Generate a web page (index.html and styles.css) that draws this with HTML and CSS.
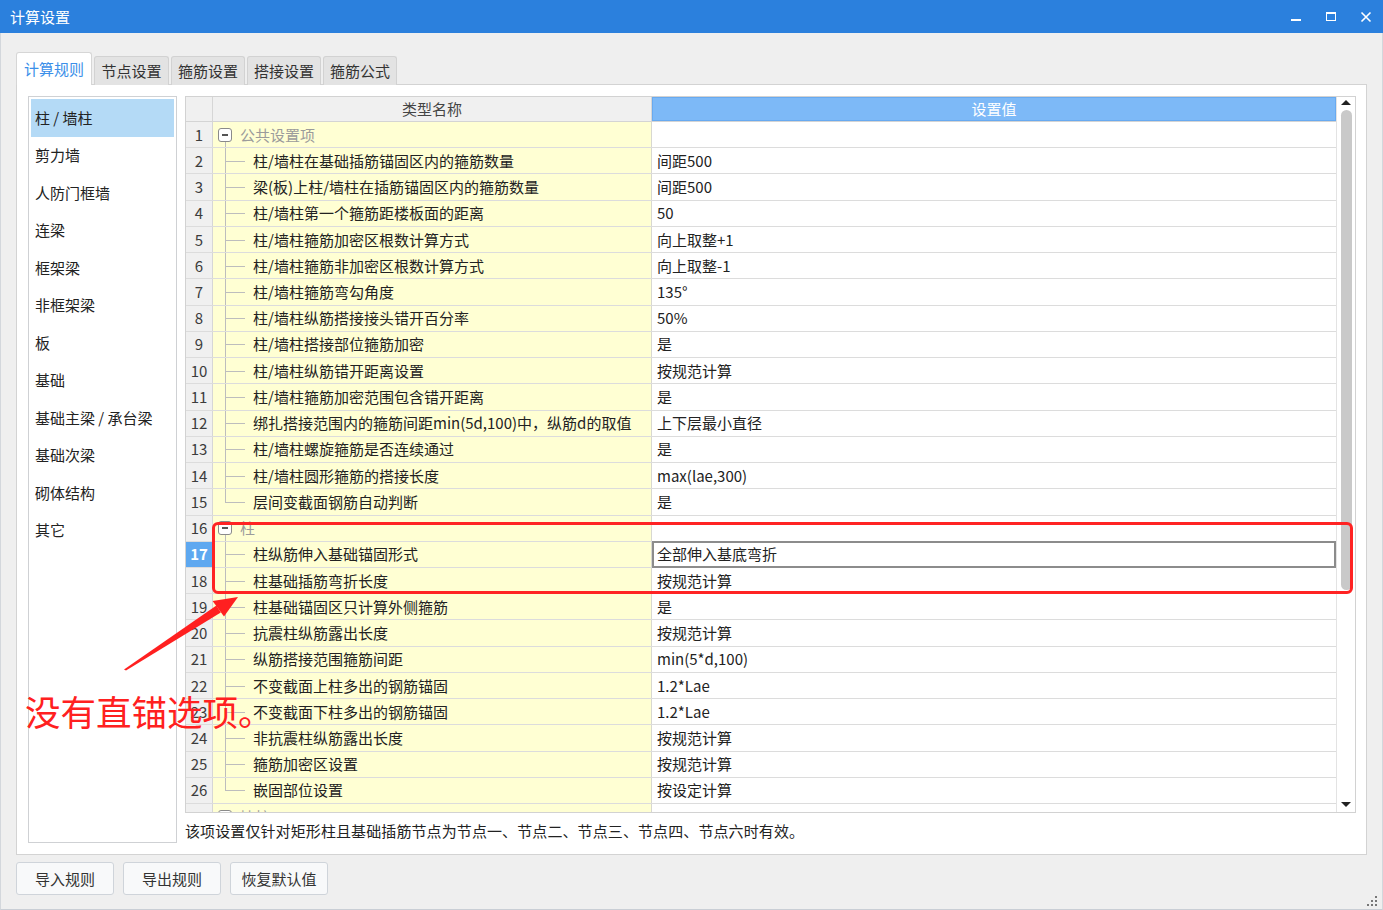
FILE: index.html
```html
<!DOCTYPE html>
<html lang="zh-CN">
<head>
<meta charset="utf-8">
<title>计算设置</title>
<link rel="stylesheet" href="styles.css">
</head>
<body>
<div class="window">
  <div class="titlebar">
    <span class="title">计算设置</span>
    <div class="winctl">
      <span class="wbtn"><svg width="12" height="12" viewBox="0 0 12 12"><rect x="1" y="8" width="10" height="2" fill="#fff"/></svg></span>
      <span class="wbtn"><svg width="12" height="12" viewBox="0 0 12 12"><rect x="1.5" y="1.5" width="9" height="8" fill="none" stroke="#fff" stroke-width="1"/><rect x="1" y="1" width="10" height="2" fill="#fff"/></svg></span>
      <span class="wbtn"><svg width="12" height="12" viewBox="0 0 12 12"><path d="M1.5 1.5 L10.5 10.5 M10.5 1.5 L1.5 10.5" stroke="#fff" stroke-width="1.6"/></svg></span>
    </div>
  </div>

  <div class="tabs">
    <div class="tab active">计算规则</div>
    <div class="tab w75">节点设置</div>
    <div class="tab">箍筋设置</div>
    <div class="tab">搭接设置</div>
    <div class="tab">箍筋公式</div>
  </div>

  <div class="panel">
    <ul class="sidebar">
      <li class="selected">柱 / 墙柱</li>
      <li>剪力墙</li>
      <li>人防门框墙</li>
      <li>连梁</li>
      <li>框架梁</li>
      <li>非框架梁</li>
      <li>板</li>
      <li>基础</li>
      <li>基础主梁 / 承台梁</li>
      <li>基础次梁</li>
      <li>砌体结构</li>
      <li>其它</li>
    </ul>

    <div class="right">
      <div class="grid">
        <div class="gridbody">
          <div class="row hdr">
            <div class="num"></div>
            <div class="hname">类型名称</div>
            <div class="hval">设置值</div>
          </div>

          <div class="row"><div class="num">1</div><div class="name grp first"><span class="box"></span>公共设置项</div><div class="val"></div></div>
          <div class="row"><div class="num">2</div><div class="name c">柱/墙柱在基础插筋锚固区内的箍筋数量</div><div class="val">间距500</div></div>
          <div class="row"><div class="num">3</div><div class="name c">梁(板)上柱/墙柱在插筋锚固区内的箍筋数量</div><div class="val">间距500</div></div>
          <div class="row"><div class="num">4</div><div class="name c">柱/墙柱第一个箍筋距楼板面的距离</div><div class="val">50</div></div>
          <div class="row"><div class="num">5</div><div class="name c">柱/墙柱箍筋加密区根数计算方式</div><div class="val">向上取整+1</div></div>
          <div class="row"><div class="num">6</div><div class="name c">柱/墙柱箍筋非加密区根数计算方式</div><div class="val">向上取整-1</div></div>
          <div class="row"><div class="num">7</div><div class="name c">柱/墙柱箍筋弯勾角度</div><div class="val">135°</div></div>
          <div class="row"><div class="num">8</div><div class="name c">柱/墙柱纵筋搭接接头错开百分率</div><div class="val">50%</div></div>
          <div class="row"><div class="num">9</div><div class="name c">柱/墙柱搭接部位箍筋加密</div><div class="val">是</div></div>
          <div class="row"><div class="num">10</div><div class="name c">柱/墙柱纵筋错开距离设置</div><div class="val">按规范计算</div></div>
          <div class="row"><div class="num">11</div><div class="name c">柱/墙柱箍筋加密范围包含错开距离</div><div class="val">是</div></div>
          <div class="row"><div class="num">12</div><div class="name c">绑扎搭接范围内的箍筋间距min(5d,100)中，纵筋d的取值</div><div class="val">上下层最小直径</div></div>
          <div class="row"><div class="num">13</div><div class="name c">柱/墙柱螺旋箍筋是否连续通过</div><div class="val">是</div></div>
          <div class="row"><div class="num">14</div><div class="name c">柱/墙柱圆形箍筋的搭接长度</div><div class="val">max(lae,300)</div></div>
          <div class="row"><div class="num">15</div><div class="name c last">层间变截面钢筋自动判断</div><div class="val">是</div></div>
          <div class="row"><div class="num">16</div><div class="name grp first"><span class="box"></span>柱</div><div class="val"></div></div>
          <div class="row"><div class="num cur">17</div><div class="name c">柱纵筋伸入基础锚固形式</div><div class="val edit">全部伸入基底弯折</div></div>
          <div class="row"><div class="num">18</div><div class="name c">柱基础插筋弯折长度</div><div class="val">按规范计算</div></div>
          <div class="row"><div class="num">19</div><div class="name c">柱基础锚固区只计算外侧箍筋</div><div class="val">是</div></div>
          <div class="row"><div class="num">20</div><div class="name c">抗震柱纵筋露出长度</div><div class="val">按规范计算</div></div>
          <div class="row"><div class="num">21</div><div class="name c">纵筋搭接范围箍筋间距</div><div class="val">min(5*d,100)</div></div>
          <div class="row"><div class="num">22</div><div class="name c">不变截面上柱多出的钢筋锚固</div><div class="val">1.2*Lae</div></div>
          <div class="row"><div class="num">23</div><div class="name c">不变截面下柱多出的钢筋锚固</div><div class="val">1.2*Lae</div></div>
          <div class="row"><div class="num">24</div><div class="name c">非抗震柱纵筋露出长度</div><div class="val">按规范计算</div></div>
          <div class="row"><div class="num">25</div><div class="name c">箍筋加密区设置</div><div class="val">按规范计算</div></div>
          <div class="row"><div class="num">26</div><div class="name c last">嵌固部位设置</div><div class="val">按设定计算</div></div>
          <div class="row"><div class="num">27</div><div class="name grp"><span class="box"></span>墙柱</div><div class="val"></div></div>
        </div>
        <div class="scrollbar">
          <span class="arrow up"></span>
          <span class="thumb"></span>
          <span class="spacer"></span>
          <span class="arrow down"></span>
        </div>
      </div>
      <div class="desc">该项设置仅针对矩形柱且基础插筋节点为节点一、节点二、节点三、节点四、节点六时有效。</div>
    </div>
  </div>

  <div class="btns">
    <button class="btn">导入规则</button>
    <button class="btn">导出规则</button>
    <button class="btn">恢复默认值</button>
  </div>

  <svg class="grip" width="12" height="12" viewBox="0 0 12 12">
    <rect x="9" y="1" width="2" height="2" fill="#777"/>
    <rect x="5" y="5" width="2" height="2" fill="#777"/>
    <rect x="9" y="5" width="2" height="2" fill="#777"/>
    <rect x="1" y="9" width="2" height="2" fill="#777"/>
    <rect x="5" y="9" width="2" height="2" fill="#777"/>
    <rect x="9" y="9" width="2" height="2" fill="#777"/>
  </svg>

  <div class="redbox"></div>
  <svg class="arrowsvg" width="1383" height="910" viewBox="0 0 1383 910">
    <polygon points="124,669.5 126,670.5 220.8,612.4 216.4,605.6" fill="#ff2020"/>
    <polygon points="238,597 224,616.5 212.6,601" fill="#ff2020"/>
  </svg>
  <div class="note">没有直锚选项。</div>
</div>
</body>
</html>
```

FILE: styles.css
```css
* { box-sizing: border-box; }

html, body {
  margin: 0;
  padding: 0;
}

body {
  width: 1383px;
  height: 910px;
  overflow: hidden;
  background: #efefef;
  font-family: "Noto Sans CJK SC", "Noto Sans", sans-serif;
  font-size: 15px;
  color: #222;
}

.window {
  position: relative;
  width: 1383px;
  height: 910px;
  border-left: 1px solid #d3d7dc;
  border-right: 1px solid #d3d7dc;
  border-bottom: 1px solid #c9ced5;
}

.titlebar {
  height: 33px;
  margin: 0 -1px;
  background: #2b80dd;
  color: #fff;
  display: flex;
  align-items: center;
  padding-left: 10px;
}

.title {
  font-size: 15px;
  line-height: 20px;
}

.winctl {
  margin-left: auto;
  display: flex;
}

.wbtn {
  width: 35px;
  height: 33px;
  display: flex;
  align-items: center;
  justify-content: center;
}

.tabs {
  display: flex;
  align-items: flex-end;
  gap: 2px;
  margin: 19px 0 -1px 15px;
  position: relative;
  z-index: 1;
}

.tab {
  width: 74px;
  height: 29px;
  display: flex;
  align-items: center;
  justify-content: center;
  background: #e3e3e3;
  border: 1px solid #d2d2d2;
  border-bottom: none;
  border-radius: 3px 3px 0 0;
  color: #333;
  line-height: 20px;
}

.tab.w75 { width: 75px; }

.tab.active {
  width: 76px;
  height: 33px;
  background: #fff;
  color: #3b8fe9;
  border-color: #d6d6d6;
}

.panel {
  margin-left: 15px;
  width: 1351px;
  height: 771px;
  background: #fff;
  border: 1px solid #d3d3d3;
  display: flex;
  padding: 11px 10px 12px 11px;
}

.sidebar {
  list-style: none;
  margin: 0;
  width: 149px;
  height: 747px;
  border: 1px solid #cfd1d4;
  padding: 2px;
}

.sidebar li {
  height: 37.5px;
  display: flex;
  align-items: center;
  padding-left: 4px;
  line-height: 20px;
  color: #222;
}

.sidebar li.selected {
  background: #b4daf6;
}

.right {
  flex: 1;
  margin-left: 8px;
  display: flex;
  flex-direction: column;
}

.grid {
  height: 717px;
  border: 1px solid #d2d2d2;
  display: flex;
}

.gridbody {
  flex: 1;
  overflow: hidden;
}

.row {
  display: grid;
  grid-template-columns: 27px 439px 1fr;
  height: 26.24px;
  border-bottom: 1px solid #dcdcdc;
  line-height: 20px;
}

.row.hdr {
  height: 25px;
  border-bottom: 1px solid #d4d4d4;
}

.num {
  background: #f0f0f0;
  border-right: 1px solid #d6d6d6;
  display: flex;
  align-items: center;
  justify-content: center;
  color: #3c3c3c;
  font-size: 15px;
}

.num.cur {
  background: #5ea8f0;
  color: #fff;
  font-weight: bold;
}

.hname {
  background: #f0f0f0;
  border-right: 1px solid #d6d6d6;
  display: flex;
  align-items: center;
  justify-content: center;
  color: #444;
}

.hval {
  background: #7db9f7;
  border: 1px solid #68aaf0;
  display: flex;
  align-items: center;
  justify-content: center;
  color: #fff;
}

.name {
  position: relative;
  background: #ffffd3;
  border-right: 1px solid #d8d8d0;
  padding-left: 40px;
  display: flex;
  align-items: center;
  white-space: nowrap;
  overflow: hidden;
  color: #222;
}

.name.c::before {
  content: "";
  position: absolute;
  left: 12px;
  top: -1px;
  bottom: -1px;
  width: 1px;
  background: #bdbdbd;
}

.name.c.last::before {
  bottom: 50%;
}

.name.c::after {
  content: "";
  position: absolute;
  left: 12px;
  width: 20px;
  top: 50%;
  height: 1px;
  background: #bdbdbd;
}

.name.grp {
  padding-left: 27px;
  color: #9b9b9b;
}

.name.grp.first::after {
  content: "";
  position: absolute;
  left: 12px;
  top: calc(50% + 7px);
  bottom: -1px;
  width: 1px;
  background: #bdbdbd;
}

.box {
  position: absolute;
  left: 5px;
  top: 50%;
  margin-top: -7px;
  width: 14px;
  height: 14px;
  border: 1px solid #8a8a8a;
  border-radius: 3px;
  background: #fff;
}

.box::after {
  content: "";
  position: absolute;
  left: 3px;
  right: 3px;
  top: 5px;
  height: 2px;
  background: #555;
}

.val {
  background: #fff;
  padding-left: 5px;
  display: flex;
  align-items: center;
  white-space: nowrap;
  color: #222;
}

.val.edit {
  border: 2px solid #8c8c8c;
  padding-left: 3px;
  margin: -1px 0 -1px 0;
}

.scrollbar {
  width: 19px;
  border-left: 1px solid #e3e3e3;
  background: #fff;
  display: flex;
  flex-direction: column;
  align-items: center;
}

.arrow {
  width: 0;
  height: 0;
  border-left: 5px solid transparent;
  border-right: 5px solid transparent;
}

.arrow.up {
  margin-top: 3px;
  border-bottom: 5px solid #222;
}

.arrow.down {
  margin-bottom: 5px;
  border-top: 5px solid #222;
}

.thumb {
  margin-top: 5px;
  width: 11px;
  height: 480px;
  border-radius: 6px;
  background: #c9c9c9;
}

.spacer { flex: 1; }

.desc {
  margin-top: 8px;
  line-height: 20px;
  font-size: 15px;
  letter-spacing: 0.1px;
  color: #222;
  white-space: nowrap;
}

.btns {
  display: flex;
  gap: 9px;
  margin: 7px 0 0 15px;
}

.btn {
  width: 98px;
  height: 33px;
  background: #f8f9fa;
  border: 1px solid #cfd4da;
  border-radius: 3px;
  font-family: "Noto Sans CJK SC", "Noto Sans", sans-serif;
  font-size: 15px;
  color: #333;
  padding: 0;
}

.grip {
  position: absolute;
  right: 4px;
  bottom: 2px;
}

.redbox {
  position: absolute;
  left: 211px;
  top: 522px;
  width: 1141px;
  height: 72px;
  border: 3px solid #ff2323;
  border-radius: 6px;
}

.arrowsvg {
  position: absolute;
  left: -1px;
  top: 0;
  pointer-events: none;
}

.note {
  position: absolute;
  left: 24px;
  top: 693px;
  font-size: 35.5px;
  line-height: 36px;
  color: #ff2020;
  white-space: nowrap;
}
```
